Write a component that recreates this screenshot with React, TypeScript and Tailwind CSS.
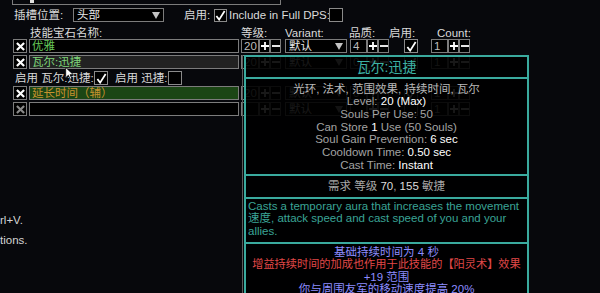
import type { ReactNode } from 'react';

const FONT = "font-['Liberation_Sans','Noto_Sans_CJK_SC',sans-serif]";

function XButton({ dim }: { dim?: boolean }) {
    return (
        <span className="flex h-[14px] w-[14px] shrink-0 items-center justify-center border border-[#7c7c7c] bg-black">
            <svg viewBox="0 0 10 10" className="h-[9px] w-[9px]" stroke={dim ? '#8a8a8a' : '#ffffff'} strokeWidth="2.4">
                <path d="M1 1L9 9M9 1L1 9" />
            </svg>
        </span>
    );
}

function PlusMinus() {
    return (
        <>
            <span className="flex h-[14px] w-[11px] shrink-0 items-center justify-center border border-[#7c7c7c] bg-black">
                <svg viewBox="0 0 8 8" className="h-[8px] w-[8px]" stroke="#ffffff" strokeWidth="1.8">
                    <path d="M0 4H8M4 0V8" />
                </svg>
            </span>
            <span className="flex h-[14px] w-[11px] shrink-0 items-center justify-center border border-[#7c7c7c] bg-black">
                <svg viewBox="0 0 8 8" className="h-[8px] w-[8px]" stroke="#ffffff" strokeWidth="1.8">
                    <path d="M0 4H8" />
                </svg>
            </span>
        </>
    );
}

function Check({ on, size = 'h-[14px] w-[14px]' }: { on?: boolean; size?: string }) {
    return (
        <span className={`flex ${size} shrink-0 items-center justify-center border border-[#8a8a8a] bg-black`}>
            {on && (
                <svg viewBox="0 0 12 12" className="h-[11px] w-[11px]" fill="none" stroke="#ffffff" strokeWidth="1.9">
                    <path d="M1.5 6.5L4.5 10.5L10.5 1" />
                </svg>
            )}
        </span>
    );
}

function Field({ w, children, className = '' }: { w: string; children?: ReactNode; className?: string }) {
    return (
        <span className={`flex h-[14px] ${w} shrink-0 items-center overflow-hidden border border-[#7c7c7c] bg-black pl-[2px] leading-[12px] ${className}`}>
            {children}
        </span>
    );
}

function Dropdown({ w, value }: { w: string; value: string }) {
    return (
        <span className={`flex h-[14px] ${w} shrink-0 items-center justify-between border border-[#7c7c7c] bg-black pl-[3px] pr-[3px] leading-[12px] text-[#e8e8e8]`}>
            <span>{value}</span>
            <svg viewBox="0 0 8 7" className="h-[7px] w-[8px]" fill="#c4c4c4">
                <path d="M0 0H8L4 7Z" />
            </svg>
        </span>
    );
}

function GemControls({ level, quality, on }: { level: string; quality: string; on?: boolean }) {
    return (
        <>
            <Field w="w-[18px]" className="ml-[2px] text-[#bdbdbd]">{level}</Field>
            <PlusMinus />
            <span className="ml-[4px]">
                <Dropdown w="w-[62px]" value="默认" />
            </span>
            <Field w="w-[17px]" className="ml-[3px] text-[#bdbdbd]">{quality}</Field>
            <PlusMinus />
            <span className="ml-[15px]">
                <Check on={on} />
            </span>
            <Field w="w-[17px]" className="ml-[13px] text-[#bdbdbd]">1</Field>
            <PlusMinus />
        </>
    );
}

function GemRow({ name, nameClass, boxClass, dim, level, quality, on }: {
    name: string;
    nameClass: string;
    boxClass: string;
    dim?: boolean;
    level: string;
    quality: string;
    on?: boolean;
}) {
    return (
        <div className="flex h-[14px] items-center pl-[13px]">
            <XButton dim={dim} />
            <span className={`ml-[2px] flex h-[14px] w-[210px] shrink-0 items-center border border-[#7c7c7c] pl-[2px] leading-[12px] ${boxClass} ${nameClass}`}>
                {name}
            </span>
            <GemControls level={level} quality={quality} on={on} />
        </div>
    );
}

function Stat({ label, value, rest }: { label: string; value?: string; rest?: string }) {
    return (
        <div className="whitespace-nowrap">
            <span className="text-[#a3a3a3]">{label}</span>
            {value && <span className="text-white">{value}</span>}
            {rest && <span className="text-[#a3a3a3]">{rest}</span>}
        </div>
    );
}

function Tooltip() {
    return (
        <div className="absolute left-[242px] top-[55px] bottom-[-60px] w-[287px] border-l border-[#5c5c5c] pl-[1px]">
            <div className="h-full border-2 border-[#3aaa9e] bg-black/[0.9]">
                <div className="flex h-[20px] items-center justify-center text-[14px] text-[#3cb2a4]">瓦尔:迅捷</div>
                <div className="h-[2px] bg-[#3aaa9e]" />
                <div className="pt-[3.5px] pb-[2.5px] text-center leading-[12.7px]">
                    <div className="text-[#b9b9b9]">光环, 法术, 范围效果, 持续时间, 瓦尔</div>
                    <Stat label="Level: " value="20 (Max)" />
                    <Stat label="Souls Per Use: 50" />
                    <Stat label="Can Store " value="1" rest=" Use (50 Souls)" />
                    <Stat label="Soul Gain Prevention: " value="6 sec" />
                    <Stat label="Cooldown Time: " value="0.50 sec" />
                    <Stat label="Cast Time: " value="Instant" />
                </div>
                <div className="h-[2px] bg-[#3aaa9e]" />
                <div className="flex h-[21px] items-center justify-center text-[#a8a8a8]">
                    需求 等级&nbsp;<span className="text-[#dcdcdc]">70</span>,&nbsp;<span className="text-[#dcdcdc]">155</span>&nbsp;敏捷
                </div>
                <div className="h-[2px] bg-[#3aaa9e]" />
                <div className="pt-[1px] pb-[5px] pl-[2px] leading-[12.5px] text-[#3aa496]">
                    <div className="whitespace-nowrap">Casts a temporary aura that increases the movement</div>
                    <div className="whitespace-nowrap">速度, attack speed and cast speed of you and your</div>
                    <div>allies.</div>
                </div>
                <div className="h-[2px] bg-[#3aaa9e]" />
                <div className="pt-[1.5px] text-center leading-[12.5px]">
                    <div className="text-[#8c8cff]">基础持续时间为 4 秒</div>
                    <div className="whitespace-nowrap text-[11.2px] text-[#e04848]">增益持续时间的加成也作用于此技能的【阳灵术】效果</div>
                    <div className="text-[#8c8cff]">+19 范围</div>
                    <div className="text-[#8c8cff]">你与周围友军的移动速度提高 20%</div>
                </div>
            </div>
        </div>
    );
}

export default function App() {
    return (
        <div className={`relative h-[293px] w-[600px] overflow-hidden bg-[#07080c] text-[11.5px] text-[#dadada] ${FONT}`}>
            <div className="ml-[12px] h-[5px] w-[269px] border-x border-b border-[#7c7c7c]">
                <div className="ml-[17px] h-[3px] w-[4px] bg-[#e0e0e0]" />
            </div>

            <div className="mt-[3px] flex h-[14px] items-center pl-[14px] leading-[12px]">
                <span className="w-[59px] shrink-0">插槽位置:</span>
                <Dropdown w="w-[91px]" value="头部" />
                <span className="ml-[20px] w-[30px] shrink-0">启用:</span>
                <Check on size="h-[13px] w-[13px]" />
                <span className="ml-[2px] w-[100px] shrink-0 whitespace-nowrap">Include in Full DPS:</span>
                <Check size="h-[14px] w-[14px]" />
            </div>

            <div className="mt-[5px] flex h-[12px] items-center pl-[30px] leading-[12px]">
                <span className="w-[211px] shrink-0">技能宝石名称:</span>
                <span className="w-[44px] shrink-0">等级:</span>
                <span className="w-[64px] shrink-0">Variant:</span>
                <span className="w-[40px] shrink-0">品质:</span>
                <span className="w-[48px] shrink-0">启用:</span>
                <span className="shrink-0">Count:</span>
            </div>

            <GemRow name="优雅" nameClass="text-[#66c95a]" boxClass="bg-black" level="20" quality="4" on />
            <div className="mt-[2px]">
                <GemRow name="瓦尔:迅捷" nameClass="text-[#7fd67a]" boxClass="bg-[#222222]" level="20" quality="0" on />
            </div>

            <div className="mt-[2px] flex h-[14px] items-center pl-[15px] leading-[12px]">
                <span className="w-[79px] shrink-0 whitespace-nowrap">启用 瓦尔:迅捷:</span>
                <Check on />
                <span className="ml-[7px] w-[53px] shrink-0 whitespace-nowrap">启用 迅捷:</span>
                <Check />
            </div>

            <div className="mt-[1px]">
                <GemRow name="延长时间（辅）" nameClass="text-[#c8922e]" boxClass="bg-[#1b4615]" level="20" quality="0" on />
            </div>
            <div className="mt-[2px]">
                <GemRow name="" nameClass="" boxClass="bg-black" dim level="" quality="" />
            </div>

            <div className="mt-[98px] leading-[12px] text-[#d4d4d4]">rl+V.</div>
            <div className="mt-[8px] leading-[12px] text-[#d4d4d4]">tions.</div>

            <Tooltip />

            <svg viewBox="0 0 11 17" className="absolute left-[65px] top-[67px] h-[13px] w-[9px]">
                <path d="M0.5 0.5V14L4 10.8L6.5 16L8.5 15L6.2 10H10.5Z" fill="#ffffff" stroke="#000000" strokeWidth="1" />
            </svg>
        </div>
    );
}
